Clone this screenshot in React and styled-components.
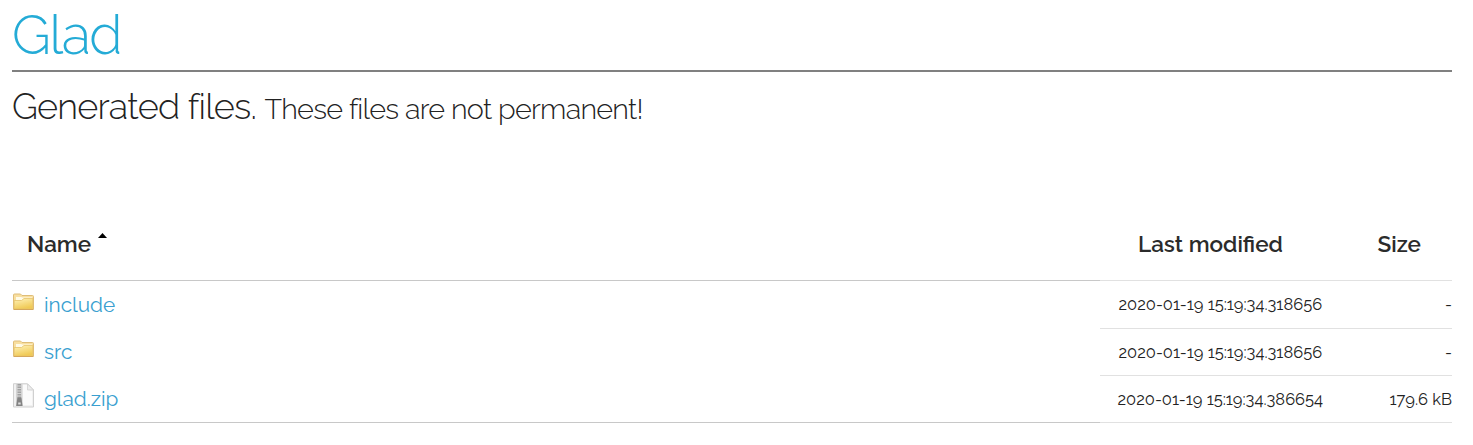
import React from "react";
import styled, { createGlobalStyle } from "styled-components";

const GlobalStyle = createGlobalStyle`
  * { box-sizing: border-box; }
  body {
    margin: 0;
    background: #fff;
    color: #222;
    font-family: Raleway, Lato, "Open Sans", sans-serif;
    font-weight: 300;
  }
`;

const Page = styled.main`
  height: 445px;
  padding: 0 21px 0 12px;
  overflow: hidden;
`;

const Header = styled.header`
  height: 72px;
  border-bottom: 2px solid #808080;
`;

const Title = styled.h1`
  margin: 0;
  color: #24abd6;
  font-size: 54px;
  font-weight: 300;
  line-height: 70px;
  letter-spacing: -1.5px;
`;

const Subtitle = styled.h2`
  margin: 0;
  height: 136px;
  font-size: 36px;
  font-weight: 300;
  line-height: 69px;
  letter-spacing: -0.76px;
  white-space: nowrap;
`;

const Note = styled.small`
  font-size: 28.8px;
  letter-spacing: -0.74px;
`;

const Table = styled.div`
  display: grid;
  grid-template-columns: 1088px 240px 112px;
`;

const HeadCell = styled.div`
  height: 73px;
  border-bottom: 1px solid ${(p) => (p.$main ? "#c8c8c8" : "#e1e1e1")};
  padding-left: ${(p) => p.$indent}px;
  color: #2b2b2b;
  font-size: 22.5px;
  font-weight: 600;
  line-height: 73px;
  white-space: nowrap;
`;

const SortArrow = styled.svg`
  width: 9px;
  height: 5px;
  margin-left: 7px;
  vertical-align: 14px;
`;

const NameCell = styled.div`
  display: flex;
  height: ${(p) => p.$height}px;
  border-bottom: 1px solid ${(p) => (p.$last ? "#c8c8c8" : "transparent")};
`;

const IconBox = styled.span`
  width: 32px;
  padding-top: ${(p) => p.$top}px;
  svg { display: block; }
`;

const FileLink = styled.a`
  color: #3a9fd0;
  font-size: 20.8px;
  font-weight: 400;
  line-height: ${(p) => p.$line}px;
`;

const DataCell = styled.div`
  height: ${(p) => p.$height}px;
  border-bottom: 1px solid #e1e1e1;
  padding-left: ${(p) => p.$indent || 0}px;
  text-align: ${(p) => (p.$right ? "right" : "left")};
  font-size: 16.5px;
  font-weight: 400;
  line-height: 47px;
  white-space: nowrap;
`;

function FolderIcon() {
  return (
    <svg width="23" height="18" viewBox="0 0 23 18">
      <defs>
        <linearGradient id="folder" x1="0" y1="0" x2="0.4" y2="1">
          <stop offset="0" stopColor="#fff3ba" />
          <stop offset="1" stopColor="#f0ca56" />
        </linearGradient>
      </defs>
      <path d="M1.5 16V2q0-1 1-1h6l1.5 1.5h10.5q1 0 1 1V16z" fill="#f8dfa0" stroke="#dfbd78" />
      <path d="M4 4h5l1.5.5H20V8H4z" fill="#fffbe8" />
      <path d="M2.2 16V7.5h7.3L12 5.5h8.8V16z" fill="url(#folder)" stroke="#e6c36a" strokeWidth=".8" />
      <path d="M1.5 16.5h20" stroke="#d5a75b" />
    </svg>
  );
}

function ZipIcon() {
  return (
    <svg width="23" height="25" viewBox="0 0 23 25">
      <path d="M1.5.7h14L21.5 7v17h-20z" fill="#f1f1f1" stroke="#d0d0d0" />
      <path d="M11 2h4l1 5 4 1v14h-9z" fill="#fff" opacity=".7" />
      <path d="M15.5 1v6h6z" fill="#ececec" stroke="#cdcdcd" strokeWidth=".7" />
      <path d="M4 1h6.5v22H4z" fill="#d4d4d4" />
      <path d="M7.3 1v14" stroke="#a2a2a2" strokeWidth="3.5" strokeDasharray="1.5 1" />
      <path d="M5.4 14.5h4l1.2 8.5H4.2z" fill="#838383" />
      <path d="M6.2 19.5h2.5v2H6.2z" fill="#ddd" />
    </svg>
  );
}

const files = [
  { name: "include", height: 48, line: 47, Icon: FolderIcon, top: 12, date: "2020-01-19 15:19:34.318656", size: "-" },
  { name: "src", height: 47, line: 45, Icon: FolderIcon, top: 11, date: "2020-01-19 15:19:34.318656", size: "-" },
  { name: "glad.zip", height: 47, line: 45, Icon: ZipIcon, top: 7, date: "2020-01-19 15:19:34.386654", size: "179.6 kB", last: true },
];

export default function App() {
  return (
    <Page>
      <GlobalStyle />
      <Header>
        <Title>Glad</Title>
      </Header>
      <Subtitle>
        Generated files. <Note>These files are not permanent!</Note>
      </Subtitle>
      <Table>
        <HeadCell $main $indent={15}>
          Name
          <SortArrow viewBox="0 0 9 5">
            <path d="M0 5 4.5 0 9 5z" fill="#000" />
          </SortArrow>
        </HeadCell>
        <HeadCell $indent={38}>Last modified</HeadCell>
        <HeadCell $indent={37.5}>Size</HeadCell>
        {files.map(({ name, height, line, Icon, top, date, size, last }) => (
          <React.Fragment key={name}>
            <NameCell $height={height} $last={last}>
              <IconBox $top={top}>
                <Icon />
              </IconBox>
              <FileLink $line={line}>{name}</FileLink>
            </NameCell>
            <DataCell $height={height} $indent={last ? 17.5 : 18.5}>{date}</DataCell>
            <DataCell $height={height} $right>{size}</DataCell>
          </React.Fragment>
        ))}
      </Table>
    </Page>
  );
}
